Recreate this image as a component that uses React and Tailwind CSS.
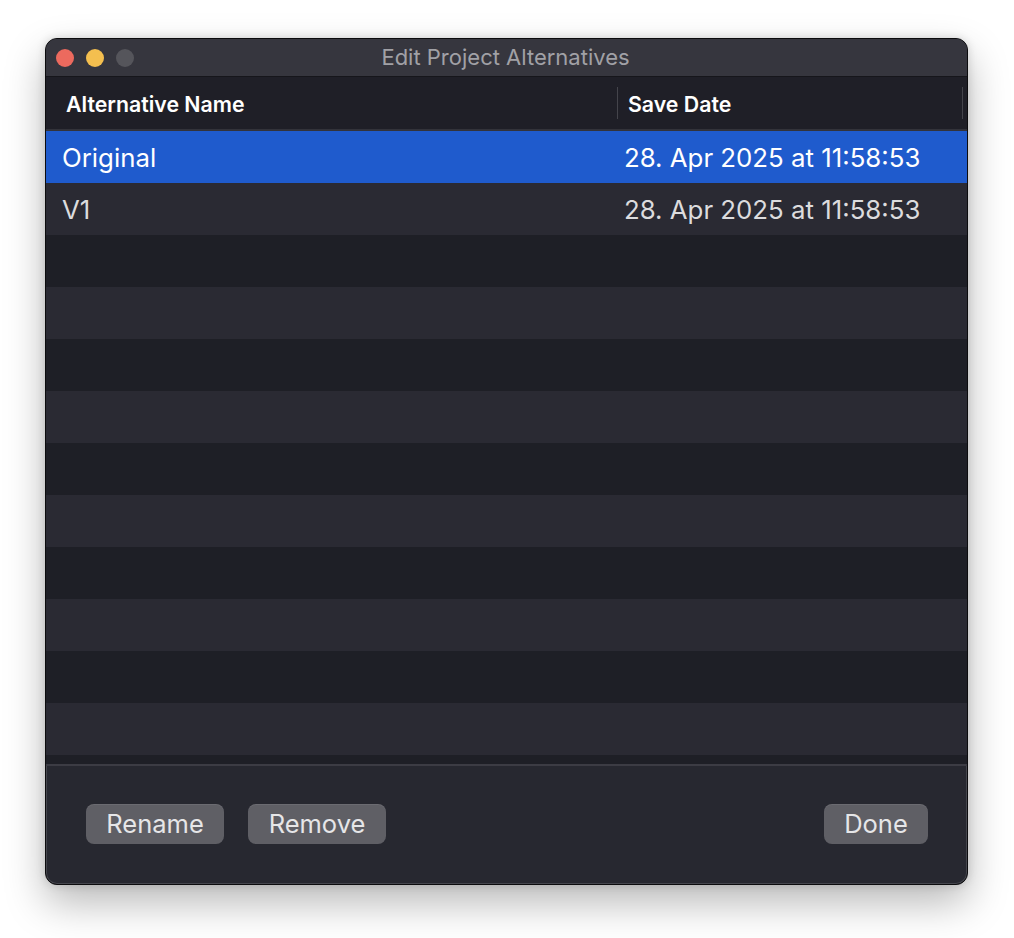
import React from "react";

const rows = [
  { name: "Original", date: "28. Apr 2025 at 11:58:53", selected: true },
  { name: "V1", date: "28. Apr 2025 at 11:58:53" },
  ...Array.from({ length: 10 }, () => ({ name: "", date: "" })),
];

function Btn({ children, w }) {
  return (
    <button
      className={`h-[40px] ${w} rounded-[8px] bg-[#5f5f65] text-[#e6e6e8] text-[25.5px] leading-none shadow-[inset_0_1px_0_rgba(255,255,255,0.08)] flex items-center justify-center`}
    >
      {children}
    </button>
  );
}

export default function App() {
  return (
    <div
      className="w-[1014px] h-[938px] bg-white pt-[38px] pl-[45px]"
      style={{ fontFamily: "Inter, 'Noto Sans', sans-serif" }}
    >
      <div className="w-[923px] h-[847px] rounded-[12px] bg-[#272830] overflow-hidden flex flex-col border border-[#0c0c0e] shadow-[inset_0_0_0_1px_rgba(255,255,255,0.14),0_18px_40px_rgba(0,0,0,0.28),0_0_10px_rgba(0,0,0,0.15)]">
        {/* Title bar */}
        <div className="relative h-[38px] shrink-0 bg-[#36363e] flex items-center border-b border-[#16161b]">
          <div className="flex items-center gap-[12px] pl-[10px]">
            <span className="w-[18px] h-[18px] rounded-full bg-[#ec6a5e]" />
            <span className="w-[18px] h-[18px] rounded-full bg-[#f4bf4f]" />
            <span className="w-[18px] h-[18px] rounded-full bg-[#55555b]" />
          </div>
          <div className="absolute inset-0 flex items-center justify-center text-[22px] text-[#a1a1a6] pr-[2px]">
            Edit Project Alternatives
          </div>
        </div>
        {/* Header */}
        <div className="h-[54px] shrink-0 bg-[#1f1f27] flex items-center pt-[3px] border-b-[2px] border-[#33333a]">
          <div className="w-[571px] pl-[20px] text-[21.3px] font-semibold text-white">Alternative Name</div>
          <div className="w-[1px] h-[32px] bg-[#44444b] -mt-[3px]" />
          <div className="flex-1 pl-[10px] text-[21.3px] font-semibold text-white">Save Date</div>
          <div className="w-[1px] h-[32px] bg-[#44444b] mr-[4px] -mt-[3px]" />
        </div>
        {/* Rows */}
        <div className="flex flex-col">
          {rows.map((r, i) => (
            <div
              key={i}
              className={`h-[52px] flex items-center pt-[3px] text-[25.8px] ${
                r.selected
                  ? "bg-[#1f5bcd] text-white"
                  : i % 2 === 1
                  ? "bg-[#2a2a33] text-[#dcdcde]"
                  : "bg-[#1e1f26] text-[#dcdcde]"
              }`}
            >
              <div className="w-[578px] pl-[16px]">{r.name}</div>
              <div className="flex-1 pl-[0px]">{r.date}</div>
            </div>
          ))}
        </div>
        <div className="h-[11px] shrink-0 bg-[#1e1f26] border-b-[2px] border-[#3c3c44]" />
        {/* Footer */}
        <div className="flex-1 flex items-start pt-[38px] pl-[40px] pr-[39px]">
          <div className="flex gap-[24px]">
            <Btn w="w-[138px]">Rename</Btn>
            <Btn w="w-[138px]">Remove</Btn>
          </div>
          <div className="flex-1" />
          <Btn w="w-[104px]">Done</Btn>
        </div>
      </div>
    </div>
  );
}
